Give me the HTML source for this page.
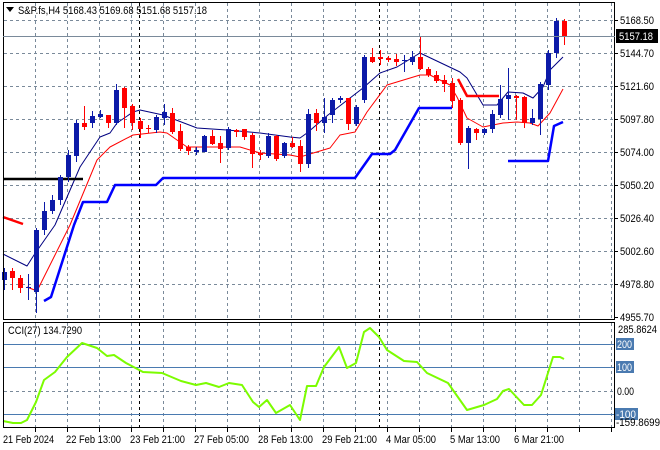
<!DOCTYPE html>
<html><head><meta charset="utf-8"><style>
html,body{margin:0;padding:0;background:#fff;}
svg{display:block;font-family:"Liberation Sans",sans-serif;font-size:11px;}
</style></head><body>
<svg id="s" width="660" height="450" xmlns="http://www.w3.org/2000/svg">
<rect width="660" height="450" fill="#fff"/>
<g id="grid"></g>
<g id="lines"></g>
<g id="candles"></g>
<rect x="3.5" y="2.5" width="611" height="317" fill="none" stroke="#000"/>
<rect x="3.5" y="322.5" width="611" height="105" fill="none" stroke="#000"/>
<line x1="3" y1="36.5" x2="615" y2="36.5" stroke="#7a8a9a"/>
<polygon points="6,7 14,7 10,12" fill="#000"/>
<text x="18" y="14" fill="#000" textLength="189" lengthAdjust="spacingAndGlyphs">S&amp;P.fs,H4  5168.43 5169.68 5151.68 5157.18</text>
<text x="8" y="334" fill="#000" textLength="74" lengthAdjust="spacingAndGlyphs">CCI(27) 134.7290</text>
<g id="axis"></g>
</svg>
<script>
var NS="http://www.w3.org/2000/svg";
function el(p,t,a,txt){var e=document.createElementNS(NS,t);for(var k in a)e.setAttribute(k,a[k]);if(txt!=null)e.textContent=txt;document.getElementById(p).appendChild(e);return e;}
function tx(x,y,s,len,col){return el("axis","text",{x:x,y:y,fill:col||"#000",textLength:len,lengthAdjust:"spacingAndGlyphs"},s);}
var dash="3,3";
var hy=[20,53,86,119,152,185,218,251,284,317];
var hl=["5168.50","5144.70","5121.60","5097.80","5074.00","5050.20","5026.40","5002.60","4978.80","4955.70"];
hy.forEach(function(y,i){if(i<9)el("grid","line",{x1:4,y1:y+.5,x2:614,y2:y+.5,stroke:"#7a8a9a","stroke-dasharray":dash});
 el("axis","line",{x1:614,y1:y+.5,x2:618,y2:y+.5,stroke:"#000"});
 tx(620,y+4,hl[i],34);});
for(var x=35;x<614;x+=32){el("grid","line",{x1:x+.5,y1:3,x2:x+.5,y2:319,stroke:"#7a8a9a","stroke-dasharray":dash});
 el("grid","line",{x1:x+.5,y1:323,x2:x+.5,y2:427,stroke:"#7a8a9a","stroke-dasharray":dash});
 el("axis","line",{x1:x+.5,y1:428,x2:x+.5,y2:432,stroke:"#000"});}
[139,379].forEach(function(x){el("grid","line",{x1:x+.5,y1:3,x2:x+.5,y2:319,stroke:"#000","stroke-dasharray":dash});
 el("grid","line",{x1:x+.5,y1:323,x2:x+.5,y2:427,stroke:"#000","stroke-dasharray":dash});});
[[344,"200",15,617],[367,"100",15,617],[414,"-100",20,616]].forEach(function(a){el("grid","line",{x1:4,y1:a[0]+.5,x2:614,y2:a[0]+.5,stroke:"#4a7ab0"});
 el("axis","rect",{x:a[3]-1,y:a[0]-6,width:a[2]+3,height:12,fill:"#4a7ab0"});
 tx(a[3],a[0]+4,a[1],a[2],"#fff");});
el("grid","line",{x1:4,y1:391.5,x2:614,y2:391.5,stroke:"#7a8a9a","stroke-dasharray":dash});
tx(617,395,"0.00",17);
tx(618,333,"285.8624",39);
tx(616,426,"-159.8699",44);
el("axis","rect",{x:616,y:29,width:42,height:14,fill:"#000"});
tx(619,40,"5157.18",34,"#fff");
[["21 Feb 2024",3,51],["22 Feb 13:00",66,55],["23 Feb 21:00",130,55],["27 Feb 05:00",194,55],["28 Feb 13:00",258,55],["29 Feb 21:00",322,55],["4 Mar 05:00",386,50],["5 Mar 13:00",450,50],["6 Mar 21:00",514,50]].forEach(function(a){tx(a[1],443,a[0],a[2]);});
function pl(pts,c,w){el("lines","polyline",{points:pts,fill:"none",stroke:c,"stroke-width":w,"stroke-linejoin":"round"});}
pl("3,254 27,266 34,255 55,225 80,167 100,137 110,133 117,123 133,112 140,110 163,115 197,128 227,130 260,133 290,137 300,138 307,133 328,115 363,88 380,73 397,67 420,53 460,72 467,78 483,105 497,105 508,92 523,93 533,98 543,87 550,70 563,57","#000080",1);
pl("27,287 37,291 55,255 70,225 97,160 110,147 133,135 160,132 167,133 187,147 240,147 260,153 290,155 300,157 330,148 340,135 355,132 367,112 387,85 420,75 430,75 450,85 457,97 467,118 483,127 503,123 517,122 530,123 538,126 550,113 563,89","#ff0000",1);
pl("44,301 51,297 74,225 83,202 107,202 115,185 156,185 163,178 355,178 372,154 390,154 395,150 419,108 452,108","#0000ff",2.5);
pl("508,161 548,161 554,126 563,122","#0000ff",2.5);
pl("3,179 83,179","#000",2.5);
pl("3,217 23,224","#ff0000",2.5);
pl("458,79 467,96 499,96","#ff0000",2.5);
pl("3,421 13,423 21,423 27,420 36,402 44,380 55,372 67,357 82,343 97,348 107,356 114,355 126,363 143,372 162,373 181,381 196,385 206,383 219,387 229,383 242,385 253,402 259,407 267,400 276,413 290,405 300,420 307,386 316,386 324,367 339,347 347,368 356,363 364,332 370,328 379,337 387,350 404,361 417,362 427,373 448,383 467,410 484,405 497,399 503,391 509,389 524,405 532,405 541,395 553,357 560,357 564,359","#7cfc00",2);
var C=[[0,280,272,268,290,"b"],[1,271,278,268,290,"r"],[2,278,288,275,293,"r"],[3,288,287,274,300,"b"],[4,292,230,228,313,"b"],
[5,230,211,202,235,"b"],[6,211,200,195,214,"b"],[7,200,177,175,205,"b"],[8,177,155,150,182,"b"],[9,156,123,120,162,"b"],
[10,123,127,106,130,"r"],[11,123,116,111,128,"b"],[12,117,114,110,118,"b"],[13,115,123,115,128,"r"],[14,123,90,84,125,"b"],
[15,88,108,87,128,"r"],[16,106,123,104,130,"r"],[17,121,129,118,138,"r"],[18,128,129,125,133,"r"],[19,130,117,115,133,"b"],
[20,118,112,104,125,"b"],[21,113,132,108,134,"r"],[22,131,149,124,151,"r"],[23,147,151,145,155,"r"],[24,152,150,147,155,"b"],
[25,152,136,135,152,"b"],[26,136,144,130,145,"r"],[27,143,149,136,163,"r"],[28,148,129,127,150,"b"],[29,130,132,129,137,"r"],
[30,129,137,129,140,"r"],[31,135,154,133,168,"r"],[32,153,155,150,160,"r"],[33,156,136,133,158,"b"],[34,136,159,135,161,"r"],
[35,156,143,142,158,"b"],[36,143,147,137,148,"r"],[37,146,164,140,172,"r"],[38,164,114,109,168,"b"],[39,113,123,109,131,"r"],
[40,123,117,98,133,"b"],[41,115,100,98,123,"b"],[42,100,98,96,103,"b"],[43,98,124,98,130,"r"],[44,124,107,105,126,"b"],
[45,100,57,55,103,"b"],[46,57,62,48,63,"r"],[47,57,59,50,65,"r"],[48,58,60,56,62,"r"],[49,59,62,54,66,"r"],
[50,61,60,55,72,"b"],[51,62,57,51,65,"b"],[52,57,69,36,70,"r"],[53,69,75,67,77,"r"],[54,75,81,71,83,"r"],
[55,80,84,75,92,"r"],[56,83,101,78,108,"r"],[57,100,143,98,145,"r"],[58,143,128,126,169,"b"],[59,129,133,128,140,"r"],
[60,133,129,128,135,"b"],[61,129,114,110,133,"b"],[62,115,99,85,118,"b"],[63,99,95,68,120,"b"],[64,96,98,95,120,"r"],
[65,97,123,96,128,"r"],[66,123,118,109,125,"b"],[67,119,84,82,135,"b"],[68,85,53,50,90,"b"],[69,53,21,18,58,"b"],[70,21,36,19,45,"r"]];
C.forEach(function(c){var x=4+8*c[0],col=c[5]=="b"?"#0c1aa8":"#ff0000";
 el("candles","line",{x1:x+.5,y1:c[3],x2:x+.5,y2:c[4],stroke:col});
 var t=Math.min(c[1],c[2]),h=Math.max(1,Math.abs(c[1]-c[2]));
 el("candles","rect",{x:x-2,y:t,width:5,height:h,fill:col});});
</script>
</body></html>
